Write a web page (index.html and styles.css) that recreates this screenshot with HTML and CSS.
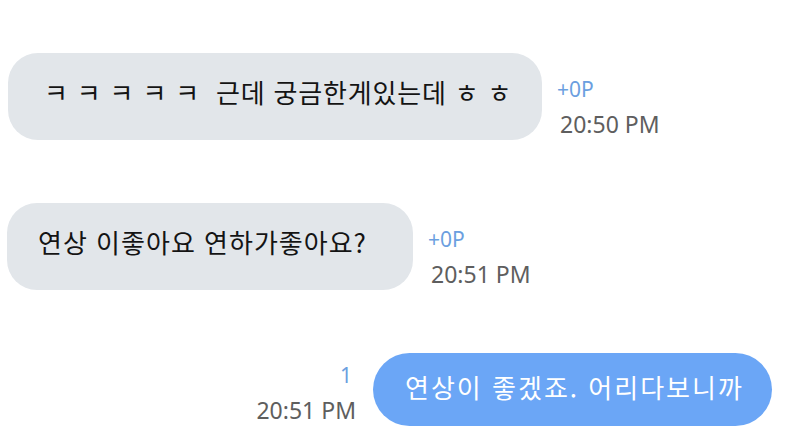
FILE: index.html
```html
<!DOCTYPE html>
<html lang="ko">
<head>
<meta charset="utf-8">
<link rel="stylesheet" href="styles.css">
</head>
<body>
<main class="chat">
  <div class="row in">
    <div class="bubble gray b1">ㅋ ㅋ ㅋ ㅋ ㅋ&nbsp; 근데 궁금한게있는데 ㅎ ㅎ</div>
    <div class="meta">
      <span class="pts">+0P</span>
      <span class="time">20:50 PM</span>
    </div>
  </div>
  <div class="row in">
    <div class="bubble gray b2">연상 이좋아요 연하가좋아요?</div>
    <div class="meta">
      <span class="pts">+0P</span>
      <span class="time">20:51 PM</span>
    </div>
  </div>
  <div class="row out">
    <div class="meta right">
      <span class="pts">1</span>
      <span class="time">20:51 PM</span>
    </div>
    <div class="bubble blue b3">연상이 좋겠죠. 어리다보니까</div>
  </div>
</main>
</body>
</html>
```
FILE: styles.css
```css
html, body {
  margin: 0;
  padding: 0;
  background: #ffffff;
  width: 800px;
  height: 439px;
  overflow: hidden;
}
.chat {
  display: flex;
  flex-direction: column;
  gap: 63px;
  padding: 53px 28px 0 7px;
}
.row {
  display: flex;
  align-items: flex-end;
}
.row.out {
  justify-content: flex-end;
}
.bubble {
  display: flex;
  align-items: center;
  font-family: "Noto Sans CJK KR", "Noto Sans", sans-serif;
  font-size: 26px;
  letter-spacing: 1px;
  color: #141414;
  white-space: nowrap;
  box-sizing: border-box;
  padding-bottom: 11px;
}
.gray {
  background: #e2e6ea;
  height: 87px;
  border-radius: 30px;
}
.blue {
  background: #6ba6f6;
  color: #ffffff;
  height: 73px;
  border-radius: 37px;
  padding-bottom: 6px;
  letter-spacing: 2px;
}
.b1 {
  width: 534px;
  margin-left: 1px;
  padding-left: 36px;
  letter-spacing: 0.8px;
}
.b2 {
  width: 406px;
  padding-left: 31px;
}
.b3 {
  width: 399px;
  padding-left: 32px;
}
.meta {
  display: flex;
  flex-direction: column;
  font-family: "Noto Sans", "Open Sans", sans-serif;
  margin-left: 15px;
  margin-bottom: 1px;
  gap: 8px;
}
.meta.right {
  align-items: flex-end;
  margin-left: 0;
  margin-right: 17px;
}
.pts {
  color: #6b9fe0;
  font-size: 21px;
  line-height: 24px;
}
.right .pts {
  margin-right: 4px;
}
.time {
  color: #5e5e5e;
  font-size: 23px;
  line-height: 30px;
  margin-left: 3px;
}
```
